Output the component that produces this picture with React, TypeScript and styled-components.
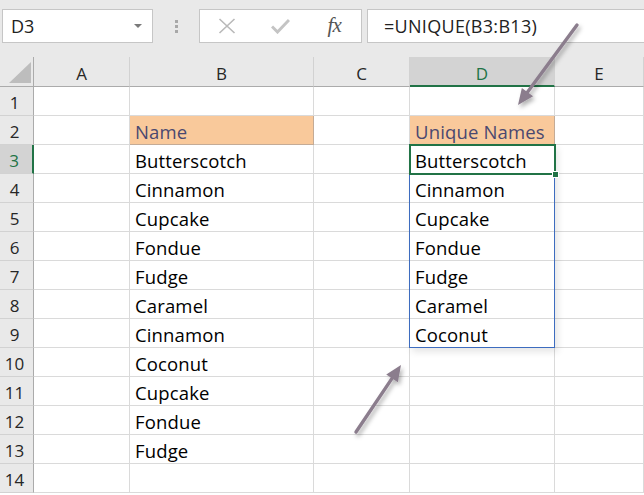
import React from 'react';
import styled, { createGlobalStyle, css } from 'styled-components';

const GlobalStyle = createGlobalStyle`
  html, body { margin: 0; padding: 0; background: #fff; }
  body { font-family: "Open Sans", "Liberation Sans", sans-serif; overflow: hidden; }
  * { box-sizing: border-box; }
`;

const Window = styled.div`
  position: relative;
  width: 644px;
  height: 495px;
  overflow: hidden;
  background: #fff;
`;

/* ---------- formula bar ---------- */

const FormulaBar = styled.div`
  height: 57px;
  background: #e9e9e9;
  display: flex;
  align-items: flex-start;
  padding: 9px 0 0 2px;
`;

const Field = styled.div`
  height: 34px;
  background: #fff;
  border: 1px solid #c6c6c6;
  display: flex;
  align-items: center;
`;

const NameBox = styled(Field)`
  width: 151px;
  justify-content: space-between;
  padding: 0 10px 0 8px;
  font-size: 18px;
  color: #222;
`;

const Caret = styled.span`
  width: 0;
  height: 0;
  border-left: 4px solid transparent;
  border-right: 4px solid transparent;
  border-top: 4px solid #7a7a7a;
`;

const Grip = styled.div`
  width: 46px;
  height: 34px;
  display: flex;
  flex-direction: column;
  align-items: center;
  justify-content: center;
  gap: 2px;
`;

const GripDot = styled.span`
  width: 3px;
  height: 3px;
  background: #a8a8a8;
`;

const ButtonStrip = styled(Field)`
  width: 163px;
`;

const StripButton = styled.div`
  width: 54px;
  height: 100%;
  display: flex;
  align-items: center;
  justify-content: center;
`;

const FxLabel = styled.span`
  font-family: "Liberation Serif", "DejaVu Serif", serif;
  font-style: italic;
  font-size: 21px;
  color: #555;
  letter-spacing: -1px;
  margin-top: -2px;
`;

const FormulaInput = styled(Field)`
  flex: 1;
  margin-left: 5px;
  border-right: none;
  padding-left: 16px;
  font-size: 18px;
  letter-spacing: 0.3px;
  color: #222;
`;

/* ---------- sheet ---------- */

const COLS = [34, 96, 184, 96, 145, 89];

const Sheet = styled.div`
  position: relative;
  display: grid;
  grid-template-columns: ${COLS.map((c) => `${c}px`).join(' ')};
  grid-template-rows: 30px repeat(14, 29px);
`;

const Corner = styled.div`
  background: #e9e9e9;
  border-right: 1px solid #ababab;
  border-bottom: 1px solid #ababab;
  display: flex;
  align-items: flex-end;
  justify-content: flex-end;
  padding: 0 2px 3px 0;
`;

const CornerTriangle = styled.span`
  width: 0;
  height: 0;
  border-left: 22px solid transparent;
  border-bottom: 21px solid #bdbdbd;
`;

const ColHeader = styled.div<{ $active?: boolean }>`
  background: #e9e9e9;
  border-right: 1px solid #d2d2d2;
  border-bottom: 1px solid #ababab;
  display: flex;
  align-items: center;
  justify-content: center;
  padding-top: 3px;
  font-size: 17px;
  color: #262626;
  ${(p) =>
    p.$active &&
    css`
      background: #d3d3d3;
      color: #217346;
      border-bottom: 2px solid #217346;
      padding-top: 4px;
    `}
`;

const RowHeader = styled.div<{ $active?: boolean }>`
  background: #e9e9e9;
  border-right: 1px solid #ababab;
  border-bottom: 1px solid #d2d2d2;
  display: flex;
  align-items: center;
  justify-content: center;
  padding: 2px 4px 0 0;
  font-size: 17px;
  color: #262626;
  ${(p) =>
    p.$active &&
    css`
      background: #d3d3d3;
      color: #217346;
      border-right: 2px solid #217346;
    `}
`;

const Cell = styled.div<{ $heading?: boolean }>`
  border-right: 1px solid #dadada;
  border-bottom: 1px solid #dadada;
  display: flex;
  align-items: center;
  padding: 3px 0 0 5px;
  font-size: 18.5px;
  letter-spacing: 0.15px;
  color: #000;
  white-space: nowrap;
  ${(p) =>
    p.$heading &&
    css`
      background: #f9c99b;
      color: #4a4870;
      border-bottom-color: #c4ab96;
      border-right-color: #c4ab96;
    `}
`;

const SpillRange = styled.div`
  position: absolute;
  left: 409px;
  top: 87px;
  width: 146px;
  height: 204px;
  border: 1px solid #3d6cbf;
  box-shadow: 3px 4px 7px rgba(0, 0, 0, 0.1);
  pointer-events: none;
`;

const ActiveCell = styled.div`
  position: absolute;
  left: 409px;
  top: 87px;
  width: 147px;
  height: 31px;
  border: 2px solid #217346;
  pointer-events: none;
`;

const FillHandle = styled.span`
  position: absolute;
  right: -5px;
  bottom: -5px;
  width: 7px;
  height: 7px;
  background: #217346;
  border: 1px solid #fff;
`;

const Annotations = styled.svg`
  position: absolute;
  left: 0;
  top: 0;
  pointer-events: none;
`;

const columnB: Record<number, string> = {
  2: 'Name',
  3: 'Butterscotch',
  4: 'Cinnamon',
  5: 'Cupcake',
  6: 'Fondue',
  7: 'Fudge',
  8: 'Caramel',
  9: 'Cinnamon',
  10: 'Coconut',
  11: 'Cupcake',
  12: 'Fondue',
  13: 'Fudge',
};

const columnD: Record<number, string> = {
  2: 'Unique Names',
  3: 'Butterscotch',
  4: 'Cinnamon',
  5: 'Cupcake',
  6: 'Fondue',
  7: 'Fudge',
  8: 'Caramel',
  9: 'Coconut',
};

const LETTERS = ['A', 'B', 'C', 'D', 'E'];

function Arrow({ x1, y1, x2, y2 }: { x1: number; y1: number; x2: number; y2: number }) {
  const dx = x2 - x1;
  const dy = y2 - y1;
  const len = Math.hypot(dx, dy);
  const ux = dx / len;
  const uy = dy / len;
  const head = 16;
  const half = 7;
  const bx = x2 - ux * head;
  const by = y2 - uy * head;
  const px = -uy * half;
  const py = ux * half;
  return (
    <g filter="url(#arrowShadow)">
      <line x1={x1} y1={y1} x2={bx + ux * 2} y2={by + uy * 2} stroke="#8b7d8d" strokeWidth={3.4} strokeLinecap="round" />
      <polygon points={`${x2},${y2} ${bx + px},${by + py} ${bx - px},${by - py}`} fill="#8b7d8d" />
    </g>
  );
}

export default function App() {
  const rows = Array.from({ length: 14 }, (_, i) => i + 1);
  return (
    <Window>
      <GlobalStyle />
      <FormulaBar>
        <NameBox>
          <span>D3</span>
          <Caret />
        </NameBox>
        <Grip>
          <GripDot />
          <GripDot />
          <GripDot />
        </Grip>
        <ButtonStrip>
          <StripButton>
            <svg width="18" height="16" viewBox="0 0 18 16">
              <path d="M1.5 1 L16.5 15 M16.5 1 L1.5 15" stroke="#b9b9b9" strokeWidth="1.6" fill="none" />
            </svg>
          </StripButton>
          <StripButton>
            <svg width="19" height="16" viewBox="0 0 19 16">
              <path d="M1 8.5 L6.5 14 L18 2" stroke="#c4c4c4" strokeWidth="3" fill="none" strokeLinejoin="miter" />
            </svg>
          </StripButton>
          <StripButton>
            <FxLabel>fx</FxLabel>
          </StripButton>
        </ButtonStrip>
        <FormulaInput>=UNIQUE(B3:B13)</FormulaInput>
      </FormulaBar>

      <Sheet>
        <Corner>
          <CornerTriangle />
        </Corner>
        {LETTERS.map((l) => (
          <ColHeader key={l} $active={l === 'D'}>
            {l}
          </ColHeader>
        ))}
        {rows.map((r) => (
          <React.Fragment key={r}>
            <RowHeader $active={r === 3}>{r}</RowHeader>
            <Cell />
            <Cell $heading={r === 2}>{columnB[r]}</Cell>
            <Cell />
            <Cell $heading={r === 2}>{columnD[r]}</Cell>
            <Cell />
          </React.Fragment>
        ))}
        <SpillRange />
        <ActiveCell>
          <FillHandle />
        </ActiveCell>
      </Sheet>

      <Annotations width={644} height={495} viewBox="0 0 644 495">
        <defs>
          <filter id="arrowShadow" x="-50%" y="-50%" width="200%" height="200%">
            <feDropShadow dx="2" dy="3" stdDeviation="2" floodColor="#000" floodOpacity="0.3" />
          </filter>
        </defs>
        <Arrow x1={577} y1={25} x2={518} y2={105} />
        <Arrow x1={356} y1={432} x2={401} y2={365} />
      </Annotations>
    </Window>
  );
}
